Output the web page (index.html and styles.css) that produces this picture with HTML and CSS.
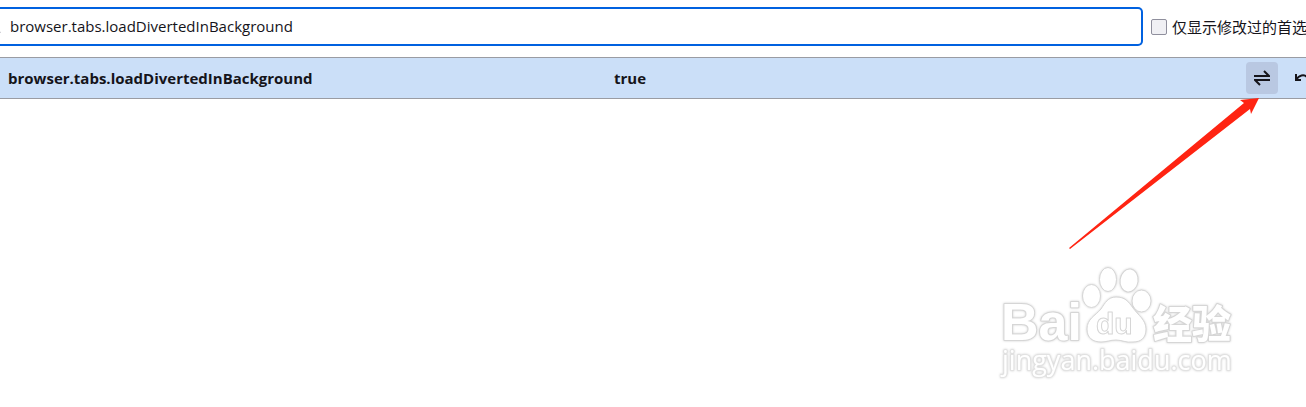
FILE: index.html
```html
<!DOCTYPE html>
<html lang="zh-CN">
<head>
  <meta charset="UTF-8">
  <title>高级首选项</title>
  <link rel="stylesheet" href="styles.css">
</head>
<body>

<div class="page">
  <form class="toolbar">
    <div class="search">
      <svg class="search-icon" viewBox="0 0 16 16" aria-hidden="true">
        <circle cx="6" cy="6" r="5"/>
        <path d="M10 10l5 5"/>
      </svg>
      <input class="search-input" type="text" aria-label="搜索首选项名称" value="browser.tabs.loadDivertedInBackground">
    </div>
    <label class="only-modified">
      <input type="checkbox">
      <span>仅显示修改过的首选项</span>
    </label>
  </form>

  <table class="prefs">
    <tr>
      <th scope="row">browser.tabs.loadDivertedInBackground</th>
      <td class="value">true</td>
      <td class="actions">
        <div class="buttons">
          <button class="btn active" type="button" aria-label="切换">
            <svg viewBox="0 0 16 16"><path d="M0 6h15L10 1M16 10H1l5 5"/></svg>
          </button>
          <button class="btn" type="button" aria-label="重置">
            <svg viewBox="0 0 16 16"><path d="M2 4v6h5M2 10C5 5 10 4 13 7c2 2 2 4 1 6"/></svg>
          </button>
        </div>
      </td>
    </tr>
  </table>
</div>

<svg class="arrow" viewBox="0 0 192 152" aria-hidden="true">
  <path d="M0 150L175 5L171 2L190 0L182 16L181 11L1 151Z"/>
</svg>

<svg class="watermark" viewBox="0 0 240 120">
  <g class="wm-outline">
    <text class="wm-bai" x="1" y="75">Bai</text>
    <text class="wm-cn" x="153" y="73">经验</text>
    <text class="wm-url" x="2" y="105">jingyan.baidu.com</text>
  </g>
  <g class="wm-paw">
    <ellipse cx="91.5" cy="31" rx="9" ry="11.5"/>
    <ellipse cx="108" cy="14.500" rx="8.5" ry="12"/>
    <ellipse cx="129" cy="15.5" rx="9" ry="11.5" transform="rotate(8 129 16)"/>
    <ellipse cx="141.5" cy="36" rx="9.5" ry="11"/>
    <path d="M116 32C108 32 105 38 101 44C95 51 87 54 87 64C87 73 93 77 101 77C107 77 110 75 116 75C122 75 126 78 133 77C141 77 146 73 146 64C146 55 138 50 133 43C128 36 125 32 116 32Z"/>
  </g>
  <text class="wm-du" x="96" y="69">du</text>
</svg>

</body>
</html>
```
FILE: styles.css
```css
html, body {
  margin: 0;
  padding: 0;
  overflow-x: hidden;
}

body {
  position: relative;
  min-height: 100vh;
  background: #fff;
  color: #15141a;
  font-family: "Open Sans", "Noto Sans CJK SC", sans-serif;
  font-size: 15px;
  line-height: 20px;
}

/* runs a little past the right edge of the window */
.page {
  margin-right: -16px;
}

.toolbar {
  display: flex;
  align-items: center;
  gap: 8px;
  padding: 7px 0 11px;
}

.search {
  position: relative;
  flex: 1;
  display: flex;
}

.search-icon {
  position: absolute;
  left: -15px;
  top: 11px;
  width: 16px;
  height: 16px;
  fill: none;
  stroke: #8f8f9d;
  stroke-width: 2;
}

.search-input {
  flex: 1;
  box-sizing: border-box;
  height: 39px;
  padding: 0 10px 2px;
  border: 2px solid #0061e0;
  border-left: 0;
  border-radius: 0 5px 5px 0;
  outline: none;
  background: transparent;
  color: inherit;
  font: inherit;
}

.only-modified {
  display: flex;
  align-items: center;
  gap: 5px;
  white-space: nowrap;
}

.only-modified input {
  appearance: none;
  box-sizing: border-box;
  width: 16px;
  height: 16px;
  margin: 0;
  border: 1px solid #8f8f9d;
  border-radius: 2px;
  background: #f0f0f4;
}

.prefs {
  width: 100%;
  table-layout: fixed;
  border-spacing: 0;
  border-top: 1px solid #9a9ca3;
  border-bottom: 1px solid #9a9ca3;
  background: #cbdff8;
  font-weight: bold;
}

.prefs th,
.prefs td {
  padding: 4px 8px;
  text-align: left;
}

.prefs th {
  width: 590px;
}

.prefs .actions {
  width: 72px;
  padding: 4px;
}

.buttons {
  display: flex;
  gap: 8px;
}

.btn {
  width: 32px;
  height: 32px;
  padding: 8px;
  border: 0;
  border-radius: 4px;
  background: transparent;
}

.btn.active {
  background: #b9c8e2;
}

.btn svg {
  display: block;
  width: 16px;
  height: 16px;
  fill: none;
  stroke: #15141a;
  stroke-width: 2;
}

.arrow {
  position: absolute;
  top: 98px;
  right: 45px;
  width: 192px;
  height: 152px;
  fill: #ff2412;
}

.watermark {
  position: absolute;
  top: 265px;
  right: 66px;
  width: 240px;
  height: 120px;
  fill: #fff;
  stroke: #d6d6d6;
  stroke-width: 1;
  stroke-linejoin: round;
  filter: drop-shadow(0 0 1px #d0d0d0);
}

.wm-outline text {
  paint-order: stroke;
  stroke-width: 2;
}

.wm-bai {
  font: bold 52px "Liberation Sans", sans-serif;
}

.wm-du {
  font: bold 30px "Liberation Sans", sans-serif;
}

.wm-cn {
  font: 900 39px "Noto Sans CJK SC", sans-serif;
}

.wm-outline .wm-url {
  font: 27px "Open Sans", sans-serif;
  stroke: #e2e2e2;
}
```
